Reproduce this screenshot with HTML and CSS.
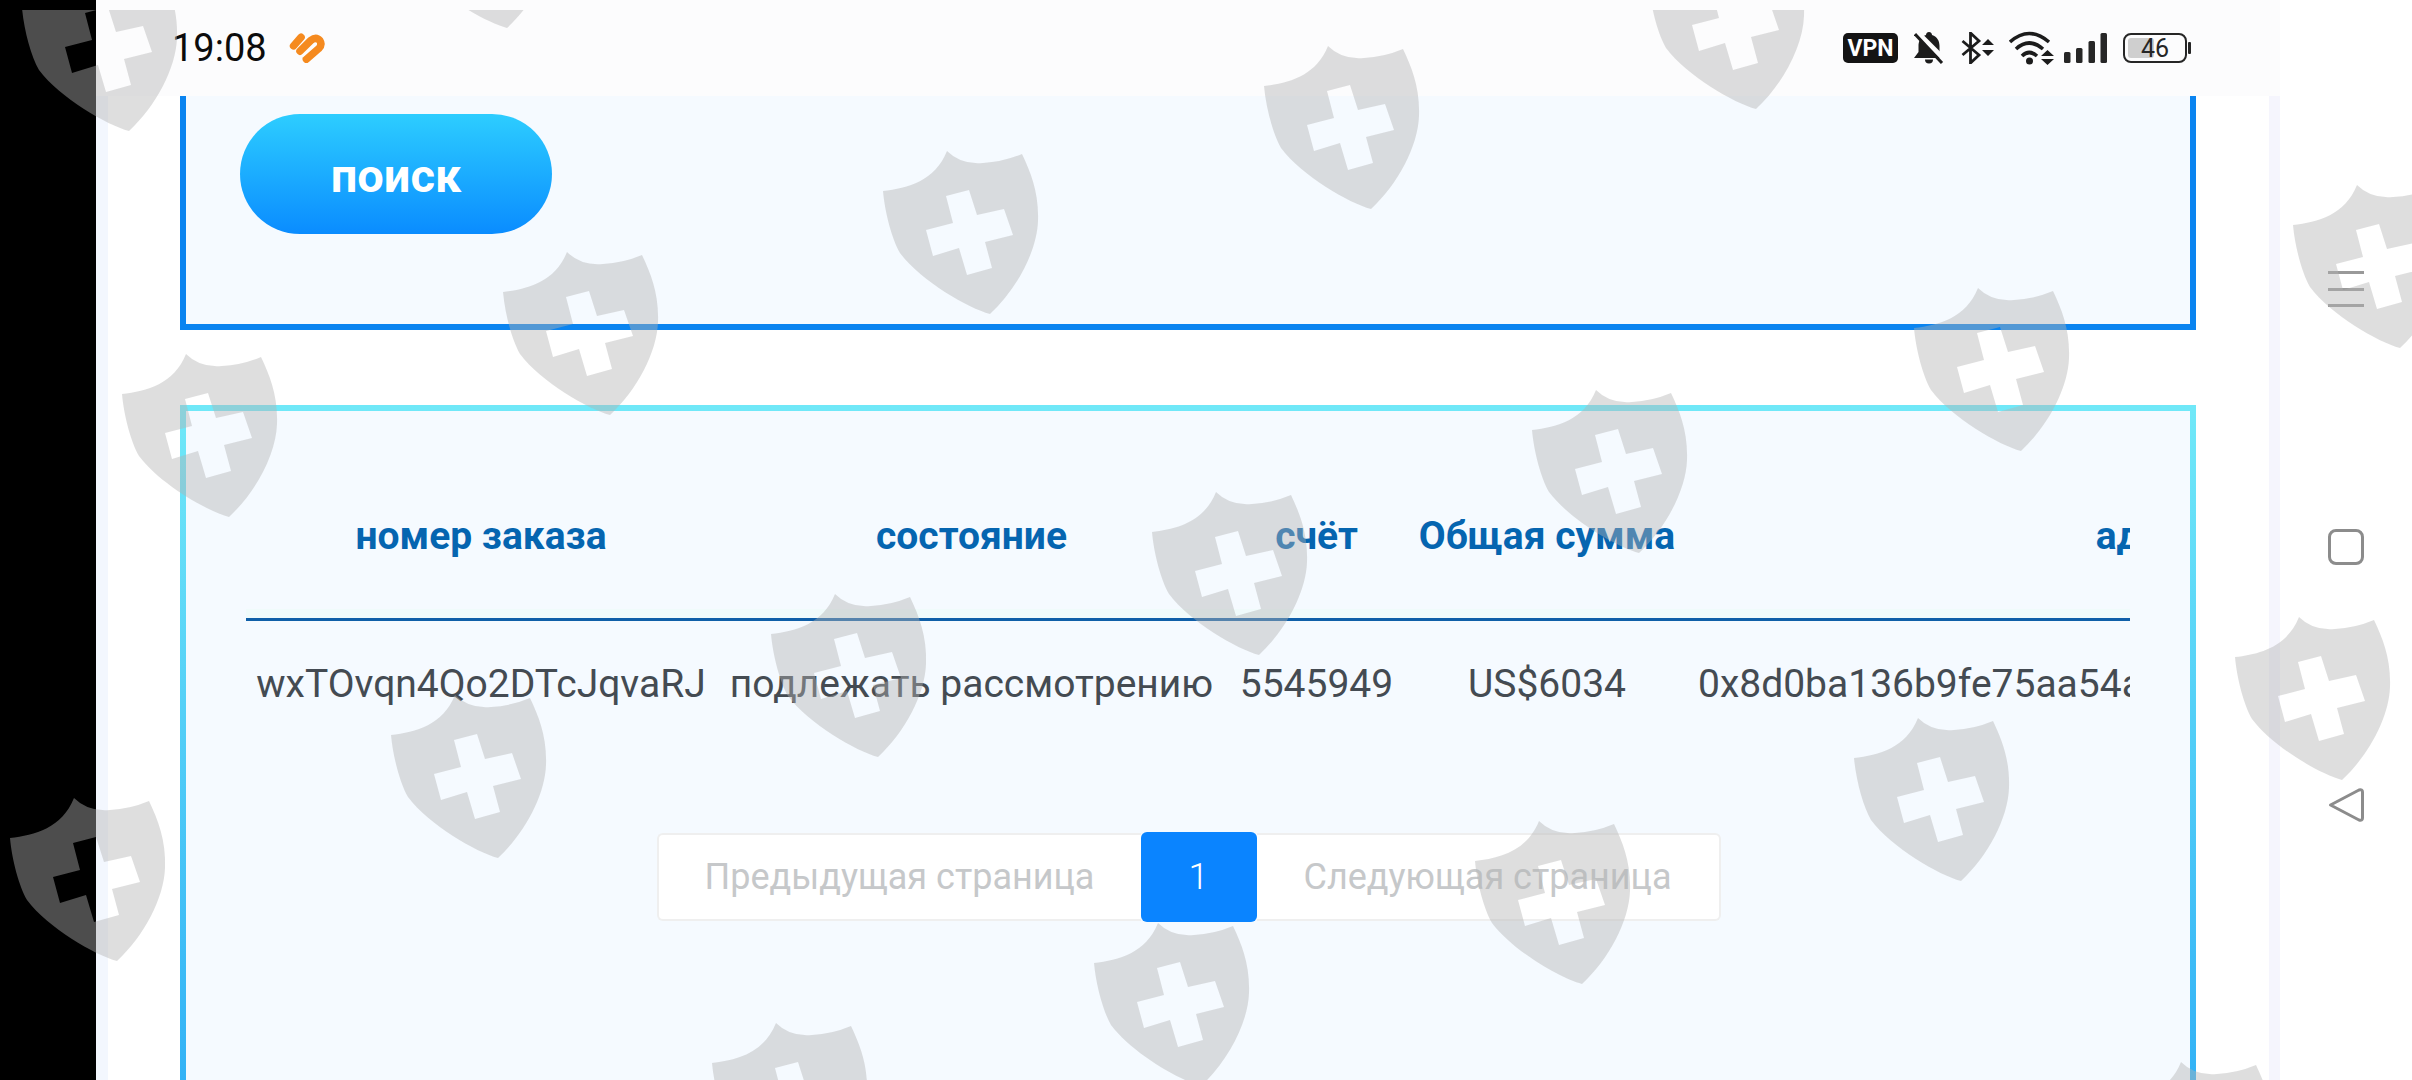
FILE: index.html
```html
<!DOCTYPE html>
<html lang="ru">
<head>
<meta charset="utf-8">
<title>поиск</title>
<link rel="stylesheet" href="styles.css">
</head>
<body>
<div class="screen">
  <div class="cutout"></div>
  <main class="page">
    <header class="status">
      <div class="status-left">
        <span class="time">19:08</span>
        <svg class="heart" viewBox="0 0 34 28"><g fill="none" stroke="#f58a1f" stroke-width="7" stroke-linecap="round" stroke-linejoin="round"><path d="M4 12 L11 4"/><path d="M10 17 L20 7 Q25 3 28.500 7 Q31 11 27.500 14.500 L16 24.500"/></g><path d="M12 23 L16.500 28 L21 23 Z" fill="#f58a1f"/></svg>
      </div>
      <div class="status-right">
        <span class="vpn">VPN</span>
        <svg class="ic-bell" viewBox="0 0 30 32"><path d="M15 0 C17 0 18 1.500 18 3 C23.500 5 25.500 9 25.500 14 L25.500 20 L30 26 L0 26 L4.500 20 L4.500 14 C4.500 9 6.500 5 12 3 C12 1.500 13 0 15 0 Z" fill="#1c1c1c"/><path d="M11 27.500 L19 27.500 A4 4 0 0 1 11 27.500 Z" fill="#1c1c1c"/><path d="M3 0 L31 28" stroke="#fcfcfd" stroke-width="5"/><path d="M1 2 L28 31" stroke="#1c1c1c" stroke-width="3"/></svg>
        <svg class="ic-bt" viewBox="0 0 33 32"><path d="M1.500 9 L18 23 L9.500 31 L9.500 1 L18 9 L1.500 23" fill="none" stroke="#1c1c1c" stroke-width="2.800"/><path d="M21 13 L27 7 L33 13 Z M21 18 L33 18 L27 24 Z" fill="#1c1c1c"/></svg>
        <svg class="ic-wifi" viewBox="0 0 45 34"><g fill="none" stroke="#1c1c1c" stroke-width="3.600"><path d="M1 11 Q20 -6 40 11"/><path d="M7 18 Q20 6 34 18"/><path d="M13 25 Q20 18 28 25"/></g><circle cx="20.500" cy="30" r="3.500" fill="#1c1c1c"/><path d="M32 25 L38.500 19 L45 25 Z M32 28 L45 28 L38.500 34 Z" fill="#1c1c1c"/></svg>
        <svg class="ic-signal" viewBox="0 0 43 30"><g fill="#262626"><rect x="0" y="19" width="6.500" height="11" rx="1.500"/><rect x="12" y="15" width="6.500" height="15" rx="1.500"/><rect x="24.500" y="8" width="6.500" height="22" rx="1.500"/><rect x="36.500" y="0" width="6.500" height="30" rx="1.500"/></g></svg>
        <div class="battery">
          <div class="battery-body"><span class="battery-fill"></span><span class="battery-num">46</span></div>
          <span class="battery-nub"></span>
        </div>
      </div>
    </header>
    <div class="content">
      <section class="panel search-panel">
        <button class="search-btn" type="button">поиск</button>
      </section>
      <section class="panel orders-panel">
        <div class="table-wrap">
          <table class="orders">
            <colgroup><col class="c1"><col class="c2"><col class="c3"><col class="c4"><col class="c5"></colgroup>
            <thead>
              <tr><th>номер заказа</th><th>состояние</th><th>счёт</th><th>Общая сумма</th><th>адрес</th></tr>
            </thead>
            <tbody>
              <tr><td>wxTOvqn4Qo2DTcJqvaRJ</td><td>подлежать рассмотрению</td><td>5545949</td><td>US$6034</td><td class="addr">0x8d0ba136b9fe75aa54a</td></tr>
            </tbody>
          </table>
        </div>
        <nav class="pager">
          <span class="pg pg-prev">Предыдущая страница</span>
          <span class="pg pg-cur">1</span>
          <span class="pg pg-next">Следующая страница</span>
        </nav>
      </section>
    </div>
  </main>
  <aside class="navbar">
    <div class="nav-menu"><span></span><span></span><span></span></div>
    <div class="nav-home"></div>
    <svg class="nav-back" viewBox="0 0 36 36"><path d="M2.500 18 L31 3 Q34.500 2 34.500 5 L34.500 31 Q34.500 34 31 33 Z" fill="none" stroke="#8c8c8c" stroke-width="3" stroke-linejoin="round"/></svg>
  </aside>
  <svg class="watermarks" viewBox="0 10 2412 1070" preserveAspectRatio="xMinYMin slice">
    <defs>
      <path id="shield" fill-rule="evenodd" d="M64 0 Q78 14 100 12 Q120 11 139 3 C148 22 156 42 155 70 C154 100 134 138 107 163 C85 157 38 130 17 102 C9 88 2 62 0 40 C25 37 52 30 64 0 Z M63 45 L70 72 L43 79 L50 105 L76 97 L84 124 L109 117 L102 91 L130 84 L121 58 L94 64 L86 39 Z"/>
    </defs>
    <g class="wm">
      <use href="#shield" x="22" y="-32"/>
      <use href="#shield" x="400" y="-135"/>
      <use href="#shield" x="1649" y="-54"/>
      <use href="#shield" x="1264" y="46"/>
      <use href="#shield" x="883" y="151"/>
      <use href="#shield" x="503" y="252"/>
      <use href="#shield" x="122" y="354"/>
      <use href="#shield" x="2293" y="185"/>
      <use href="#shield" x="1914" y="288"/>
      <use href="#shield" x="1532" y="390"/>
      <use href="#shield" x="1152" y="492"/>
      <use href="#shield" x="771" y="594"/>
      <use href="#shield" x="391" y="695"/>
      <use href="#shield" x="10" y="798"/>
      <use href="#shield" x="2235" y="617"/>
      <use href="#shield" x="1854" y="718"/>
      <use href="#shield" x="1475" y="821"/>
      <use href="#shield" x="1094" y="923"/>
      <use href="#shield" x="712" y="1023"/>
      <use href="#shield" x="2117" y="1062"/>
    </g>
  </svg>
</div>
</body>
</html>
```

FILE: styles.css
```css
* { box-sizing: border-box; }
html, body { margin: 0; padding: 0; height: 100%; }
body { background: #fff; font-family: Roboto, "Liberation Sans", sans-serif; overflow: hidden; }

.screen { position: relative; display: flex; width: 2412px; height: 1080px; overflow: hidden; background: #fff; }
.cutout { flex: 0 0 96px; background: #000; }
.page { flex: 0 0 2184px; display: flex; flex-direction: column; min-width: 0; }
.navbar { flex: 0 0 132px; display: flex; flex-direction: column; align-items: flex-start; padding: 271px 0 0 48px; background: #fff; }

/* status bar */
.status { flex: 0 0 96px; display: flex; align-items: center; justify-content: space-between; padding: 0 89px 0 76px; background: #fcfcfd; }
.status-left { display: flex; align-items: center; gap: 22px; }
.time { font-size: 38px; line-height: 1; color: #0c0c0c; }
.heart { width: 37px; height: 30px; display: block; }
.status-right { display: flex; align-items: center; }
.vpn { width: 55px; height: 30px; display: flex; align-items: center; justify-content: center; background: #141414; border-radius: 5px; color: #fff; font-size: 23px; font-weight: 700; }
.ic-bell { width: 30px; height: 32px; margin-left: 16px; }
.ic-bt { width: 33px; height: 32px; margin-left: 17px; }
.ic-wifi { width: 45px; height: 34px; margin-left: 15px; }
.ic-signal { width: 43px; height: 30px; margin-left: 10px; }
.battery { display: flex; align-items: center; margin-left: 16px; }
.battery-body { position: relative; width: 64px; height: 30px; border: 2.500px solid #262626; border-radius: 8px; display: flex; align-items: center; justify-content: center; }
.battery-fill { position: absolute; left: 3px; top: 3px; bottom: 3px; width: 26px; background: #cfcfcf; border-radius: 3px; }
.battery-num { position: relative; font-size: 25px; line-height: 1; color: #262626; }
.battery-nub { width: 3px; height: 12px; margin-left: 1px; background: #262626; border-radius: 1px; }

/* page body */
.content { flex: 1 1 auto; min-height: 0; background: #fff; border-left: 12px solid #f3f7fe; border-right: 11px solid #f5f5fd; padding: 0 73px 0 72px; }
.panel { background: #f5faff; }
.search-panel { padding: 18px 54px 90px; border: 6px solid #0a84f0; border-top: 0; }
.search-btn { display: block; width: 312px; height: 120px; padding: 3px 0 0; border: 0; border-radius: 60px; background: linear-gradient(180deg, #2dcdff, #0a8cff); color: #fff; font: 700 47px Roboto, sans-serif; }

.orders-panel { margin-top: 75px; height: 900px; padding: 40px 60px 0; border: 6px solid; border-image: linear-gradient(180deg, #70e8f8, #1ea0f5) 1; }
.table-wrap { overflow: hidden; }
.orders { width: 2366px; table-layout: fixed; border-collapse: collapse; font-size: 39px; }
.c1 { width: 470px; }
.c2 { width: 511px; }
.c3 { width: 179px; }
.c4 { width: 282px; }
.c5 { width: 924px; }
.orders th { height: 168px; padding: 4px 0 0; text-align: center; white-space: nowrap; font-weight: 700; color: #0565b0; border-bottom: 3px solid #0f5fa8; box-shadow: inset 0 -9px 0 #f0fbfb; }
.orders td { height: 127px; padding: 2px 0 0; text-align: center; white-space: nowrap; color: #444b52; }
.orders td.addr { text-align: left; padding-left: 10px; }

.pager { display: flex; align-items: center; justify-content: center; margin-top: 86px; margin-left: 1px; }
.pg { display: flex; align-items: center; justify-content: center; height: 88px; background: #fff; border: 2px solid #efefef; color: #c6c8ca; font-size: 36px; }
.pg-prev { width: 484px; border-right: 0; border-radius: 6px 0 0 6px; }
.pg-cur { width: 116px; height: 90px; background: #0a84ff; border: 0; border-radius: 6px; color: #fff; font-weight: 300; }
.pg-next { width: 464px; border-left: 0; border-radius: 0 6px 6px 0; }

/* navigation bar */
.nav-menu { width: 36px; height: 36px; display: flex; flex-direction: column; justify-content: space-between; }
.nav-menu span { display: block; height: 3px; background: #999; }
.nav-home { width: 36px; height: 36px; margin-top: 222px; border: 3px solid #8c8c8c; border-radius: 8px; }
.nav-back { width: 36px; height: 36px; margin-top: 222px; }

/* watermark layer */
.watermarks { position: absolute; left: 0; top: 10px; width: 2412px; height: 1070px; pointer-events: none; }
.wm { fill: rgba(179, 179, 179, .43); }
```
